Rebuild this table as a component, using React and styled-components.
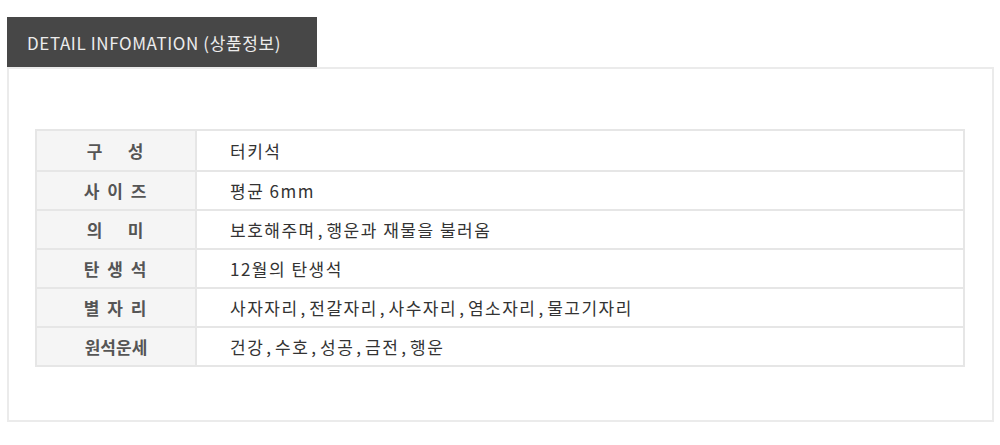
import styled, { createGlobalStyle } from "styled-components";

const Global = createGlobalStyle`
  body {
    margin: 0;
    background: #ffffff;
    font-family: "Noto Sans CJK KR", "Noto Sans", sans-serif;
  }
`;

const Page = styled.div`
  padding: 17px 6px 0 7px;
  width: 987px;
`;

const Tab = styled.div`
  width: 310px;
  height: 50px;
  box-sizing: border-box;
  background: #474747;
  color: #ececec;
  font-size: 17px;
  padding-left: 20px;
  display: flex;
  align-items: center;
  letter-spacing: 0.6px;
`;

const Box = styled.div`
  border: 2px solid #ebebeb;
  height: 355px;
  box-sizing: border-box;
  padding: 60px 27px 0 26px;
`;

const Table = styled.div`
  border: 2px solid #e6e6e6;
  display: grid;
  grid-template-columns: 160px 1fr;
`;

const Row = styled.div`
  display: contents;
`;

const Head = styled.div`
  height: 39px;
  box-sizing: border-box;
  background: #f5f5f5;
  border-right: 2px solid #e6e6e6;
  border-top: ${(p) => (p.first ? "none" : "2px solid #e6e6e6")};
  display: flex;
  align-items: center;
  justify-content: center;
  color: #555;
  font-weight: bold;
  font-size: 17px;
  white-space: pre;
  letter-spacing: ${(p) => p.spacing || "0"};
`;

const Cell = styled.div`
  height: 39px;
  box-sizing: border-box;
  border-top: ${(p) => (p.first ? "none" : "2px solid #e6e6e6")};
  display: flex;
  align-items: center;
  padding-left: 33px;
  color: #333;
  font-size: 17px;
  letter-spacing: 1.5px;
`;

const Comma = styled.span`
  letter-spacing: 4px;
  margin-left: 2px;
`;

const rows = [
  ["구    성", "터키석", "2px"],
  ["사 이 즈", "평균 6mm", "2px"],
  ["의    미", "보호해주며, 행운과 재물을 불러옴", "2px"],
  ["탄 생 석", "12월의 탄생석", "2px"],
  ["별 자 리", "사자자리,전갈자리,사수자리,염소자리,물고기자리", "2px"],
  ["원석운세", "건강,수호,성공,금전,행운", "0"],
];

const withCommas = (text) =>
  text.split(",").map((part, i, all) => (
    <span key={i}>
      {part}
      {i < all.length - 1 && <Comma>,</Comma>}
    </span>
  ));

export default function App() {
  return (
    <Page>
      <Global />
      <Tab>DETAIL INFOMATION (상품정보)</Tab>
      <Box>
        <Table>
          {rows.map(([h, v, s], i) => (
            <Row key={h}>
              <Head first={i === 0} spacing={s}>{h}</Head>
              <Cell first={i === 0}>{withCommas(v)}</Cell>
            </Row>
          ))}
        </Table>
      </Box>
    </Page>
  );
}
